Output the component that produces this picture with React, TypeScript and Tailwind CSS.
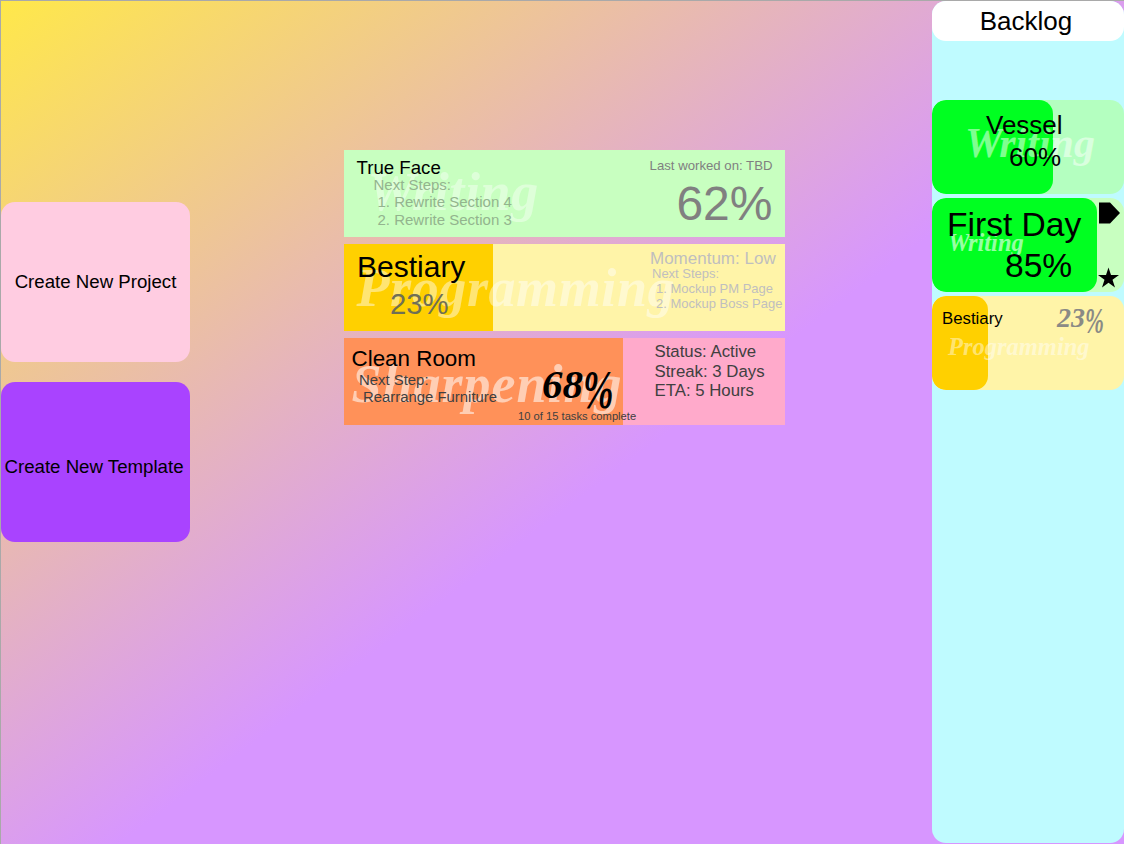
import type { ReactNode } from "react";

const script = "absolute whitespace-nowrap font-['Liberation_Serif',serif] font-bold italic leading-none";

function Project({ color, children }: { color: string; children: ReactNode }) {
  return <article className={`relative h-[87px] w-[441px] overflow-hidden whitespace-nowrap ${color}`}>{children}</article>;
}

function BacklogItem({ color, children }: { color: string; children: ReactNode }) {
  return <article className={`relative h-[94px] overflow-hidden whitespace-nowrap rounded-[14px] ${color}`}>{children}</article>;
}

export default function App() {
  return (
    <div className="flex h-[844px] w-[1124px] overflow-hidden border-l border-t border-[#a9a9a9] bg-[linear-gradient(to_bottom_right,#ffe84a_0%,#d796ff_55.3%)] font-['Liberation_Sans',Arial,sans-serif] text-black">
      <nav className="flex w-[189px] flex-col gap-5 pt-[201px] text-[18.67px]">
        <button className="h-[160px] whitespace-nowrap rounded-[14px] bg-[#ffcce1]">Create New Project</button>
        <button className="h-[160px] whitespace-nowrap rounded-[14px] bg-[#a943ff] pr-[3px] pt-2.5">Create New Template</button>
      </nav>

      <main className="ml-[153.5px] flex w-[441px] flex-col gap-[7px] pt-[149px]">
        <Project color="bg-[#c8ffc0]">
          <span className={`${script} left-[24px] top-[15px] text-[54px] tracking-[0.6px] text-white/40`}>Writing</span>
          <div className="relative flex justify-between">
            <div className="flex flex-col pl-[13px] pt-2 text-[15px] text-[#93b48e]">
              <h2 className="text-[18.67px] leading-5 text-black">True Face</h2>
              <p className="pl-[17px] leading-[14px]">Next Steps:</p>
              <ol className="pl-[21px]">
                <li className="leading-5">1. Rewrite Section 4</li>
                <li className="leading-4">2. Rewrite Section 3</li>
              </ol>
            </div>
            <div className="flex flex-col items-end pr-3 pt-2 text-[#808080]">
              <p className="text-[13.2px] leading-4">Last worked on: TBD</p>
              <strong className="text-[48px] font-normal leading-[60px]">62%</strong>
            </div>
          </div>
        </Project>

        <Project color="bg-[#fff4a8]">
          <div className="absolute inset-y-0 left-0 w-[149px] bg-[#ffd000]" />
          <span className={`${script} left-[13px] top-[17px] text-[54px] tracking-[0.6px] text-white/45`}>Programming</span>
          <div className="relative flex">
            <div className="flex w-[306.5px] flex-col pl-[13.5px] pt-[5px]">
              <h2 className="text-[30px] leading-9">Bestiary</h2>
              <p className="pl-[33px] text-[29.3px] leading-[38px] text-[#6f6f55]">23%</p>
            </div>
            <div className="pt-[6px] text-[13px] text-[#bfbfbf]">
              <p className="text-[17px] leading-[18px]">Momentum: Low</p>
              <p className="pl-[2px] leading-3">Next Steps:</p>
              <ol className="pl-[6px]">
                <li className="leading-[18px]">1. Mockup PM Page</li>
                <li className="leading-3">2. Mockup Boss Page</li>
              </ol>
            </div>
          </div>
        </Project>

        <Project color="bg-[#ffaacb]">
          <div className="absolute inset-y-0 left-0 w-[279.5px] bg-[#ff9159]" />
          <span className={`${script} left-[8px] top-[19px] text-[54px] tracking-[1px] text-white/55`}>Sharpening</span>
          <div className="relative flex text-[#404040]">
            <div className="w-[174.5px] pl-2 pt-[9px] text-[14.9px]">
              <h2 className="text-[22.4px] leading-6 text-black">Clean Room</h2>
              <p className="pl-[7.5px] leading-[18px]">Next Step:</p>
              <p className="pl-[11.5px] leading-[16px]">Rearrange Furniture</p>
            </div>
            <div className="w-[135px] pt-[23px]">
              <strong className="flex h-[49px] pl-[24px] font-['Liberation_Serif',serif] text-[41px] italic leading-[46px] text-black">
                68<span className="w-[30px] origin-left scale-x-[0.68] pt-1.5 text-[54px]">%</span>
              </strong>
              <p className="text-[11.2px] leading-3">10 of 15 tasks complete</p>
            </div>
            <div className="pl-[1.5px] pt-1 text-[16.8px] leading-[19.5px]">
              <p>Status: Active</p>
              <p>Streak: 3 Days</p>
              <p>ETA: 5 Hours</p>
            </div>
          </div>
        </Project>
      </main>

      <aside className="ml-[147.5px] h-[842px] w-[192px] rounded-[14px] bg-[#bffbff]">
        <h1 className="h-10 rounded-[14px] bg-white pr-1 text-center text-[26px] leading-10">Backlog</h1>
        <div className="flex flex-col gap-1 pt-[58.5px]">
          <BacklogItem color="bg-[#b4ffc0]">
            <div className="absolute inset-y-0 left-0 w-[121px] rounded-[14px] bg-[#00ff21]" />
            <span className={`${script} left-[33px] top-[22px] text-[42px] text-white/50`}>Writing</span>
            <div className="relative pt-[9px] text-[26px] leading-8">
              <h2 className="pl-[54px]">Vessel</h2>
              <p className="pl-[77px]">60%</p>
            </div>
          </BacklogItem>
          <BacklogItem color="bg-[#c8ffc0]">
            <div className="absolute inset-y-0 left-0 w-[165px] rounded-[14px] bg-[#00ff21]" />
            <span className={`${script} left-[16px] top-[33px] text-[24.5px] text-white/60`}>Writing</span>
            <div className="relative flex">
              <div className="w-[165px] pt-[6px] text-[33.6px] leading-[41px]">
                <h2 className="pl-[15px]">First Day</h2>
                <p className="pl-[73px]">85%</p>
              </div>
              <svg className="h-[94px] w-[27px]" viewBox="0 0 27 94">
                <path d="M2 4.5h11L23 15 13 25.5H2z" />
                <path d="M11.5 69.5l2.5 7.6h8l-6.5 4.7 2.5 7.7-6.5-4.8-6.5 4.8 2.5-7.7L1 77.1h8z" />
              </svg>
            </div>
          </BacklogItem>
          <BacklogItem color="bg-[#fff4a8]">
            <div className="absolute inset-y-0 left-0 w-[56px] rounded-[14px] bg-[#ffd000]" />
            <span className={`${script} left-[16px] top-[39px] text-[24.5px] text-white/45`}>Programming</span>
            <div className="relative flex justify-between pl-[10px] pr-[19px] pt-2">
              <h2 className="text-[16.8px] leading-[30px]">Bestiary</h2>
              <p className="flex h-[30px] font-['Liberation_Serif',serif] text-[28px] font-bold italic leading-[27px] text-[#8a8a85]">
                23<span className="w-[20px] origin-left scale-x-[0.65] pt-1 text-[35px]">%</span>
              </p>
            </div>
          </BacklogItem>
        </div>
      </aside>
    </div>
  );
}
